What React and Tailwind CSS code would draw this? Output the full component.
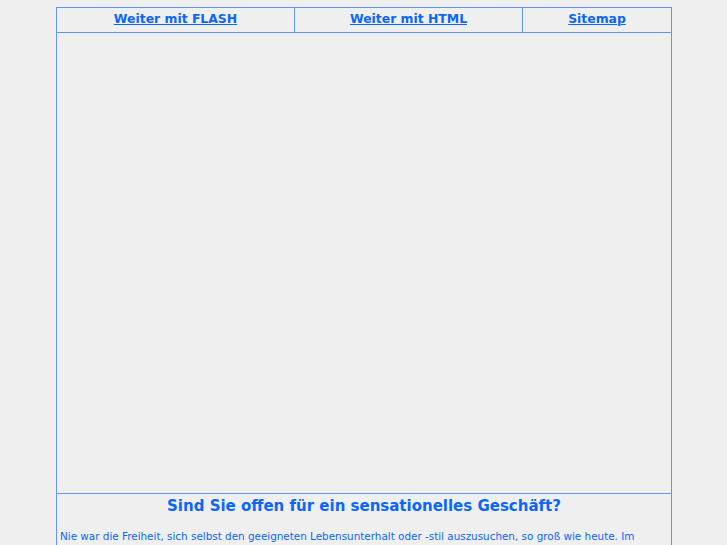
export default function App() {
  const link = "text-[#0a66ff] underline font-bold";
  return (
    <div className="min-h-[545px] bg-[#efefef] pt-[7px] overflow-hidden h-[545px]" style={{ fontFamily: '"DejaVu Sans", Verdana, sans-serif' }}>
      <div className="ml-[56px] w-[616px] border border-[#5f96f5]">
        <div className="grid grid-cols-[238px_228px_1fr] h-[25px] border-b border-[#5f96f5] text-[12.4px] leading-[21px]">
          <div className="border-r border-[#5f96f5] text-center"><a href="#" className={link}>Weiter mit FLASH</a></div>
          <div className="border-r border-[#5f96f5] text-center"><a href="#" className={link}>Weiter mit HTML</a></div>
          <div className="text-center"><a href="#" className={link}>Sitemap</a></div>
        </div>
        <div className="h-[461px] border-b border-[#5f96f5]"></div>
        <div className="px-[3px]">
          <h1 className="text-center font-bold text-[15px] leading-[24px] text-[#0a66ff]">Sind Sie offen für ein sensationelles Geschäft?</h1>
          <p className="mt-[10px] text-[10.4px] leading-[16px] text-[#0a66ff]">
            Nie war die Freiheit, sich selbst den geeigneten Lebensunterhalt oder -stil auszusuchen, so groß wie heute. Im Zeitalter der Globalisierung eröffnen sich täglich neue Möglichkeiten, die eigenen Träume zu verwirklichen und ein selbstbestimmtes Leben zu führen.
          </p>
        </div>
      </div>
    </div>
  );
}
